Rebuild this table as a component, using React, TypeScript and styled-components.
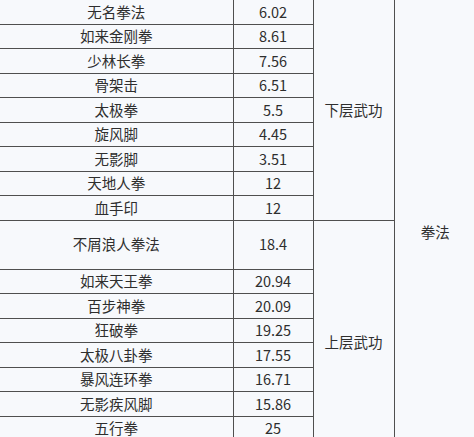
import React from "react";
import styled, { createGlobalStyle } from "styled-components";

const GlobalStyle = createGlobalStyle`
  html, body {
    margin: 0;
    padding: 0;
    overflow: hidden;
    background: #f7f9fc;
  }
`;

const Page = styled.div`
  width: 474px;
  height: 437px;
  overflow: hidden;
  background: #f7f9fc;
`;

const Table = styled.table`
  border-collapse: collapse;
  table-layout: fixed;
  width: 478px;
  font-family: "Noto Sans CJK SC", "Noto Sans", sans-serif;
  font-size: 14.5px;
  color: #2e2e2e;
`;

const Cell = styled.td<{ $tall?: boolean }>`
  height: ${(p) => (p.$tall ? "48px" : "23.5px")};
  padding: 0;
  text-align: center;
  vertical-align: middle;
  line-height: 1;
  border: 1px solid #4f4f4f;
  white-space: nowrap;

  tr:first-child > & {
    border-top: none;
  }
  &:first-child {
    border-left: none;
  }
`;

const GroupCell = styled(Cell)`
  border-right: 1.5px solid #4f4f4f;
`;

const CategoryCell = styled(Cell)`
  border-right: none;
  border-bottom: none;
  padding-right: 2px;
`;

type Move = { name: string; value: string; tall?: boolean };

const lower: Move[] = [
  { name: "无名拳法", value: "6.02" },
  { name: "如来金刚拳", value: "8.61" },
  { name: "少林长拳", value: "7.56" },
  { name: "骨架击", value: "6.51" },
  { name: "太极拳", value: "5.5" },
  { name: "旋风脚", value: "4.45" },
  { name: "无影脚", value: "3.51" },
  { name: "天地人拳", value: "12" },
  { name: "血手印", value: "12" },
];

const upper: Move[] = [
  { name: "不屑浪人拳法", value: "18.4", tall: true },
  { name: "如来天王拳", value: "20.94" },
  { name: "百步神拳", value: "20.09" },
  { name: "狂破拳", value: "19.25" },
  { name: "太极八卦拳", value: "17.55" },
  { name: "暴风连环拳", value: "16.71" },
  { name: "无影疾风脚", value: "15.86" },
  { name: "五行拳", value: "25" },
  { name: "", value: "" },
];

const App: React.FC = () => {
  const total = lower.length + upper.length + 1;
  return (
    <Page>
      <GlobalStyle />
      <Table>
        <colgroup>
          <col style={{ width: 233 }} />
          <col style={{ width: 80 }} />
          <col style={{ width: 81 }} />
          <col style={{ width: 84 }} />
        </colgroup>
        <tbody>
          {lower.map((m, i) => (
            <tr key={m.name}>
              <Cell>{m.name}</Cell>
              <Cell>{m.value}</Cell>
              {i === 0 && (
                <>
                  <GroupCell rowSpan={lower.length}>下层武功</GroupCell>
                  <CategoryCell rowSpan={total}>拳法</CategoryCell>
                </>
              )}
            </tr>
          ))}
          {upper.map((m, i) => (
            <tr key={`u${i}`}>
              <Cell $tall={m.tall}>{m.name}</Cell>
              <Cell $tall={m.tall}>{m.value}</Cell>
              {i === 0 && <GroupCell rowSpan={upper.length}>上层武功</GroupCell>}
            </tr>
          ))}
        </tbody>
      </Table>
    </Page>
  );
};

export default App;
